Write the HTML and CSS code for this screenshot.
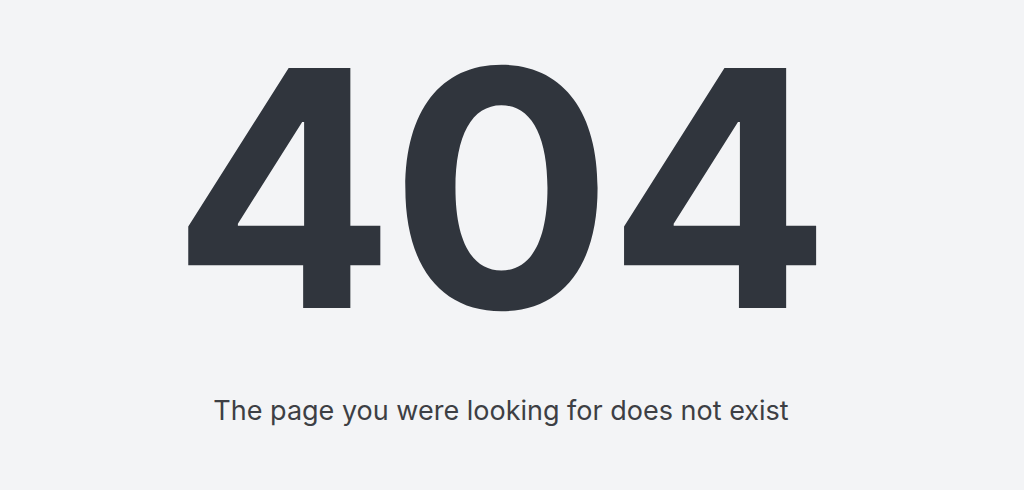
FILE: index.html
```html
<!DOCTYPE html>
<html lang="en">
<head>
  <meta charset="UTF-8">
  <meta name="viewport" content="width=device-width, initial-scale=1.0">
  <title>Page not found</title>
  <link rel="stylesheet" href="styles.css">
</head>
<body>
  <main class="not-found">
    <h1 class="code">404</h1>
    <p class="message">The page you were looking for does not exist</p>
  </main>
</body>
</html>
```

FILE: styles.css
```css
body {
  margin: 0;
  background-color: #f3f4f6;
  font-family: Inter, "Noto Sans", sans-serif;
  color: #30353d;
}

.not-found {
  display: flex;
  flex-direction: column;
  align-items: center;
  padding: 7px 22px 0 0;
}

.code {
  margin: 0 4px 0 0;
  padding: 0 16px;
  font-size: 330px;
  font-weight: 700;
  line-height: 1.1;
  letter-spacing: -0.015em;
}

.message {
  margin: 24px 0 0;
  font-size: 27px;
  color: #3d3f44;
}
```
